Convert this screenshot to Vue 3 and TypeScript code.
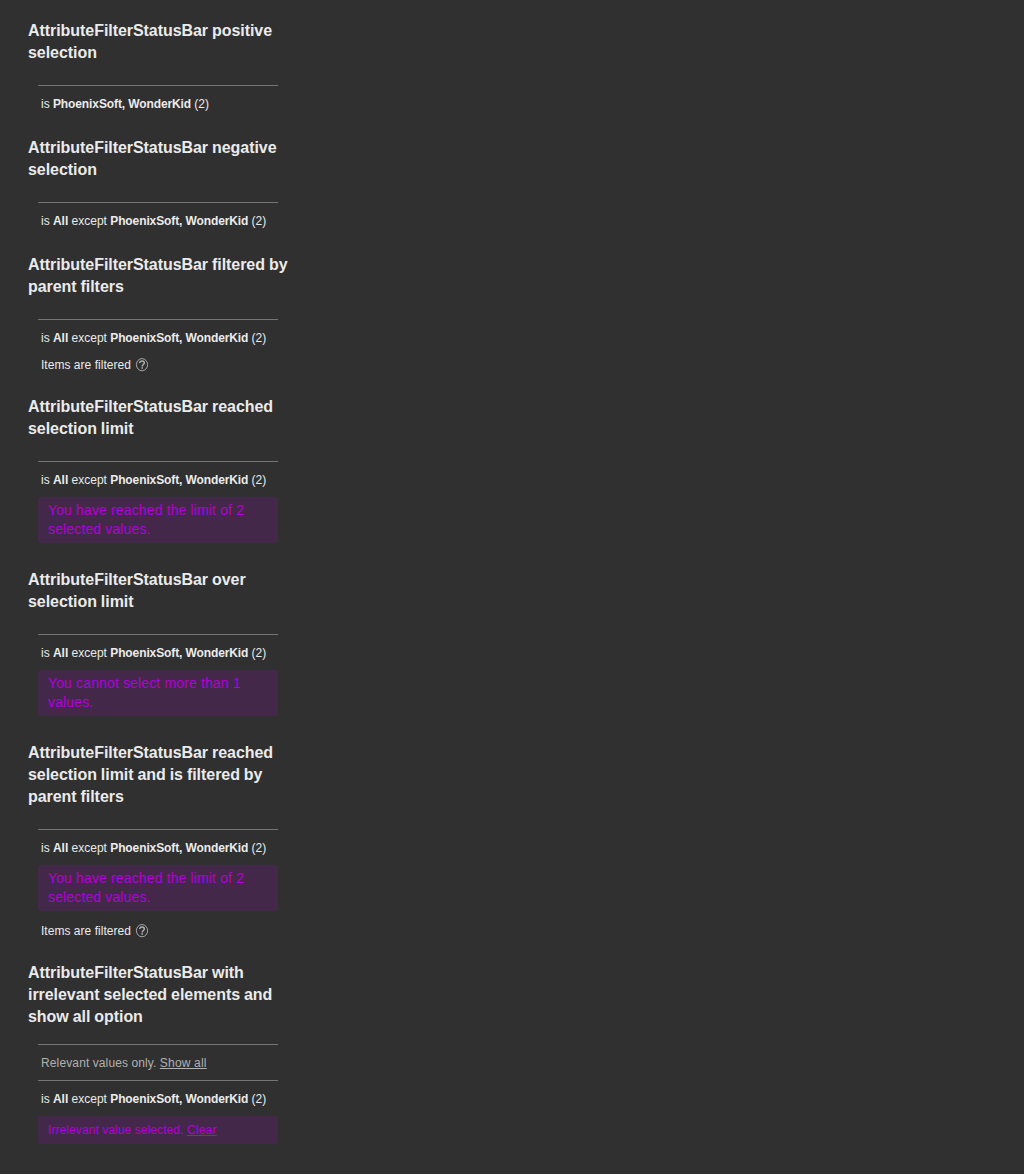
<script setup lang="ts">
interface Section {
  title: string
  showAll?: boolean
  negative?: boolean
  message?: string
  filtered?: boolean
  irrelevant?: boolean
}

const sections: Section[] = [
  { title: 'AttributeFilterStatusBar positive selection' },
  { title: 'AttributeFilterStatusBar negative selection', negative: true },
  { title: 'AttributeFilterStatusBar filtered by parent filters', negative: true, filtered: true },
  {
    title: 'AttributeFilterStatusBar reached selection limit',
    negative: true,
    message: 'You have reached the limit of 2 selected values.',
  },
  {
    title: 'AttributeFilterStatusBar over selection limit',
    negative: true,
    message: 'You cannot select more than 1 values.',
  },
  {
    title: 'AttributeFilterStatusBar reached selection limit and is filtered by parent filters',
    negative: true,
    message: 'You have reached the limit of 2 selected values.',
    filtered: true,
  },
  {
    title: 'AttributeFilterStatusBar with irrelevant selected elements and show all option',
    negative: true,
    showAll: true,
    irrelevant: true,
  },
]
</script>

<template>
  <main class="page">
    <section v-for="s in sections" :key="s.title" class="story">
      <h4 class="title" :class="{ tight: s.showAll }">{{ s.title }}</h4>
      <div class="bar">
        <div v-if="s.showAll" class="row muted">Relevant values only. <a class="link">Show all</a></div>
        <div class="row">
          is <template v-if="s.negative"><b>All</b> except </template><b class="values">PhoenixSoft, WonderKid</b> (2)
        </div>
        <div v-if="s.message" class="message">{{ s.message }}</div>
        <div v-if="s.irrelevant" class="message small">Irrelevant value selected. <a class="link">Clear</a></div>
        <div v-if="s.filtered" class="filtered">
          <span>Items are filtered</span>
          <svg class="help" viewBox="0 0 14 14" width="14" height="14" fill="none" stroke="currentColor">
            <ellipse cx="7" cy="6.700" rx="5.600" ry="6.100" stroke-width="0.9" />
            <path d="M4.700 5C4.700 3.700 5.700 3.100 7 3.100c1.400 0 2.300.7 2.300 1.800C9.300 6.400 7.200 6.600 7.200 8.400" stroke-width="1.500" />
            <path d="M7.200 9.300v1.500" stroke-width="1.600" />
          </svg>
        </div>
      </div>
    </section>
  </main>
</template>

<style>
body {
  background: #303030;
}
</style>

<style scoped>
.page {
  box-sizing: border-box;
  width: 308px;
  min-height: 1174px;
  padding: 20px 10px 0 28px;
  font-family: 'Liberation Sans', Arial, sans-serif;
  color: #ebebeb;
}
.story {
  display: flex;
  flex-direction: column;
}
.title {
  margin: 0 0 21px;
  font-size: 16px;
  line-height: 22px;
  font-weight: 700;
  letter-spacing: -0.055px;
  word-spacing: -0.4px;
}
.title.tight {
  margin-bottom: 16px;
}
.bar {
  width: 240px;
  margin-left: 10px;
  padding-bottom: 16px;
  font-size: 12px;
}
.row {
  box-sizing: border-box;
  height: 36px;
  padding-left: 3px;
  border-top: 1px solid #757575;
  line-height: 36px;
  white-space: nowrap;
  word-spacing: -0.05px;
}
.values {
  letter-spacing: -0.105px;
}
.muted {
  color: #b0b0b0;
  letter-spacing: 0.13px;
  word-spacing: -0.2px;
}
.link {
  text-decoration: underline;
  letter-spacing: 0.22px;
}
.message {
  box-sizing: border-box;
  padding: 4px 10px;
  margin-bottom: 10px;
  border-radius: 3px;
  background: #442849;
  color: #b000dc;
  font-size: 14px;
  line-height: 19px;
  letter-spacing: 0.14px;
}
.message.small {
  height: 28px;
  padding: 0 10px;
  font-size: 12px;
  line-height: 28px;
  letter-spacing: 0.08px;
}
.filtered {
  display: flex;
  align-items: center;
  height: 19px;
  padding-left: 3px;
  margin-bottom: 6px;
  letter-spacing: 0.03px;
}
.help {
  margin-left: 4px;
  color: #b0b0b0;
}
</style>
